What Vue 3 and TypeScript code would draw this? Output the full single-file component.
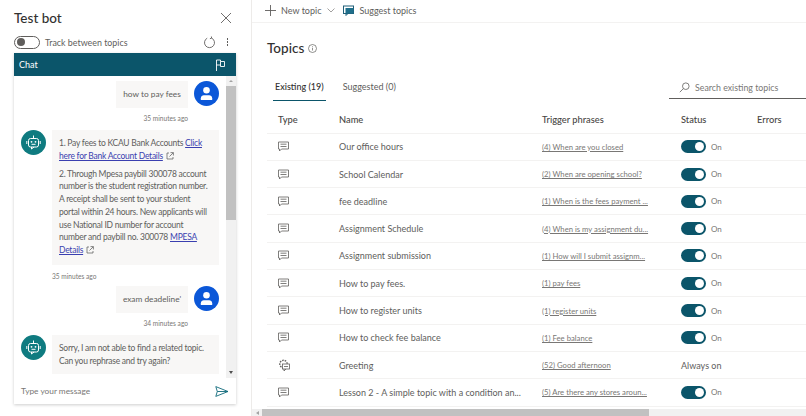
<script setup lang="ts">
interface Topic {
  name: string
  phrase: string
  system?: boolean
}

const topics: Topic[] = [
  { name: 'Our office hours', phrase: '(4) When are you closed' },
  { name: 'School Calendar', phrase: '(2) When are opening school?' },
  { name: 'fee deadline', phrase: '(1) When is the fees payment ...' },
  { name: 'Assignment Schedule', phrase: '(4) When is my assignment du...' },
  { name: 'Assignment submission', phrase: '(1) How will I submit assignm...' },
  { name: 'How to pay fees.', phrase: '(1) pay fees' },
  { name: 'How to register units', phrase: '(1) register units' },
  { name: 'How to check fee balance', phrase: '(1) Fee balance' },
  { name: 'Greeting', phrase: '(52) Good afternoon', system: true },
  { name: 'Lesson 2 - A simple topic with a condition an...', phrase: '(5) Are there any stores aroun...' },
]
</script>

<template>
  <div class="page">
    <aside class="side">
      <div class="side-head">
        <span class="side-title">Test bot</span>
        <svg class="close" width="12" height="12" viewBox="0 0 12 12"><path d="M1 1l10 10M11 1L1 11" stroke="#605e5c" stroke-width="0.9" fill="none" /></svg>
      </div>
      <div class="track">
        <span class="switch-off"><i></i></span>
        <span class="track-label">Track between topics</span>
        <svg class="reset" width="13" height="13" viewBox="0 0 13 13"><path d="M4.2 2.2a5 5 0 1 0 4.4-.1M8.4 .5l.2 1.7-1.7.5" stroke="#605e5c" stroke-width="0.9" fill="none" /></svg>
        <span class="dots"><i></i><i></i><i></i></span>
      </div>
      <section class="chat">
        <header class="chat-head">
          <span>Chat</span>
          <svg width="11" height="12" viewBox="0 0 11 12"><path d="M1.5 12V1h4v1.5h4v5h-4V6h-4M5.5 2.500V6" stroke="#fff" stroke-width="0.9" fill="none" /></svg>
        </header>
        <div class="chat-body">
          <div class="messages">
            <div class="row-user">
              <div class="bubble user-one">how to pay fees</div>
              <span class="avatar user">
                <svg width="15" height="15" viewBox="0 0 15 15"><circle cx="7.500" cy="4.300" r="3.300" fill="#fff" /><path d="M1.800 14v-1.800c0-2 1.600-3 3-3h5.400c1.400 0 3 1 3 3V14z" fill="#fff" /></svg>
              </span>
            </div>
            <div class="time right">35 minutes ago</div>
            <div class="row-bot">
              <span class="avatar bot">
                <svg width="15" height="15" viewBox="0 0 15 15"><path d="M7.500 .5v2.500" stroke="#fff" /><rect x="2.500" y="3.500" width="10" height="8.500" rx="2" stroke="#fff" fill="none" /><path d="M.8 6v3M14.200 6v3M5.500 12v2l2.500-2" stroke="#fff" fill="none" /><circle cx="5.500" cy="6.800" r=".9" fill="#fff" /><circle cx="9.500" cy="6.800" r=".9" fill="#fff" /><path d="M5.500 9.300h4" stroke="#fff" /></svg>
              </span>
              <div class="bubble bot-one">
                <p>1. Pay fees to KCAU Bank Accounts <a>Click here for Bank Account Details</a><svg class="ext" width="8" height="8" viewBox="0 0 8 8"><path d="M3 1H1v6h6V5M4.500 .6h2.900v2.900M7.200 .8L3.500 4.500" stroke="#555" stroke-width=".7" fill="none" /></svg></p>
                <p>2. Through Mpesa paybill 300078 account number is the student registration number. A receipt shall be sent to your student portal within 24 hours. New applicants will use National ID number for account number and paybill no. 300078 <a>MPESA Details</a><svg class="ext" width="8" height="8" viewBox="0 0 8 8"><path d="M3 1H1v6h6V5M4.500 .6h2.900v2.900M7.200 .8L3.500 4.500" stroke="#555" stroke-width=".7" fill="none" /></svg></p>
              </div>
            </div>
            <div class="time left">35 minutes ago</div>
            <div class="row-user second">
              <div class="bubble user-two">exam deadeline'</div>
              <span class="avatar user">
                <svg width="15" height="15" viewBox="0 0 15 15"><circle cx="7.500" cy="4.300" r="3.300" fill="#fff" /><path d="M1.800 14v-1.800c0-2 1.600-3 3-3h5.400c1.400 0 3 1 3 3V14z" fill="#fff" /></svg>
              </span>
            </div>
            <div class="time right">34 minutes ago</div>
            <div class="row-bot">
              <span class="avatar bot">
                <svg width="15" height="15" viewBox="0 0 15 15"><path d="M7.500 .5v2.500" stroke="#fff" /><rect x="2.500" y="3.500" width="10" height="8.500" rx="2" stroke="#fff" fill="none" /><path d="M.8 6v3M14.200 6v3M5.500 12v2l2.500-2" stroke="#fff" fill="none" /><circle cx="5.500" cy="6.800" r=".9" fill="#fff" /><circle cx="9.500" cy="6.800" r=".9" fill="#fff" /><path d="M5.500 9.300h4" stroke="#fff" /></svg>
              </span>
              <div class="bubble bot-two">Sorry, I am not able to find a related topic. Can you rephrase and try again?</div>
            </div>
          </div>
          <div class="vbar">
            <span class="arrow up"></span>
            <span class="vthumb"></span>
            <span class="arrow down"></span>
          </div>
        </div>
        <footer class="composer">
          <span>Type your message</span>
          <svg width="14" height="11" viewBox="0 0 14 11"><path d="M.8 .6L13 5.500.8 10.400l1.500-4.900zM2.300 5.500H13" stroke="#0f6a7a" stroke-width=".9" fill="none" /></svg>
        </footer>
      </section>
    </aside>

    <main class="main">
      <div class="toolbar">
        <span class="tool">
          <svg width="11" height="11" viewBox="0 0 11 11"><path d="M5.500 0v11M0 5.500h11" stroke="#605e5c" stroke-width=".9" /></svg>
          New topic
          <svg class="caret" width="8" height="5" viewBox="0 0 8 5"><path d="M.5 .5L4 4 7.500 .5" stroke="#8a8886" stroke-width=".8" fill="none" /></svg>
        </span>
        <span class="tool suggest">
          <svg width="11" height="11" viewBox="0 0 11 11"><rect x=".5" y="1" width="10" height="7.500" fill="#fff" stroke="#1f5f78" /><rect x="2.500" y="3" width="8" height="5.500" fill="#1f6f8b" /><path d="M3 8.500v2l2-2" stroke="#1f5f78" fill="none" /></svg>
          Suggest topics
        </span>
      </div>
      <div class="content">
        <h1 class="title">Topics
          <svg width="9" height="9" viewBox="0 0 9 9"><circle cx="4.500" cy="4.500" r="4" stroke="#605e5c" stroke-width=".7" fill="none" /><path d="M4.500 4v2.500M4.500 2.300v1" stroke="#605e5c" stroke-width=".7" /></svg>
        </h1>
        <div class="tabbar">
          <span class="tab active">Existing (19)</span>
          <span class="tab">Suggested (0)</span>
          <span class="search">
            <svg width="11" height="11" viewBox="0 0 11 11"><circle cx="6.800" cy="4.200" r="3.300" stroke="#605e5c" stroke-width=".8" fill="none" /><path d="M4.400 6.600L.8 10.200" stroke="#605e5c" stroke-width=".8" /></svg>
            Search existing topics
          </span>
        </div>
        <div class="grid-row head">
          <span>Type</span><span>Name</span><span>Trigger phrases</span><span>Status</span><span>Errors</span>
        </div>
        <div v-for="t in topics" :key="t.name" class="grid-row">
          <span class="type">
            <svg v-if="!t.system" width="11" height="11" viewBox="0 0 11 11"><path d="M.5 1h10v7H3.500L1.500 10V8h-1zM2.500 3.200h6M2.500 5.500h6" stroke="#605e5c" stroke-width=".8" fill="none" /></svg>
            <svg v-else width="12" height="13" viewBox="0 0 12 13"><circle cx="5.500" cy="5" r="3.700" stroke="#605e5c" stroke-width="1.400" stroke-dasharray="1.600 1" fill="none" /><rect x="4.500" y="5" width="7" height="5" fill="#fff" stroke="#605e5c" stroke-width=".8" /><path d="M6 10v2l2-2M6 7.500h4" stroke="#605e5c" stroke-width=".8" fill="none" /></svg>
          </span>
          <span class="name">{{ t.name }}</span>
          <a class="phrase">{{ t.phrase }}</a>
          <span v-if="t.system" class="always">Always on</span>
          <span v-else class="status"><span class="switch-on"><i></i></span>On</span>
          <span></span>
        </div>
      </div>
      <div class="hbar">
        <span class="harrow"></span>
        <span class="hthumb"></span>
      </div>
    </main>
  </div>
</template>

<style>
html, body { margin: 0; background: #fff; }
</style>

<style scoped>
.page {
  display: flex; width: 806px; height: 416px; overflow: hidden; background: #fff;
  font-family: Lato, "Open Sans", sans-serif; color: #605e5c; font-size: 9px;
}
.side {
  width: 252px; flex: none; box-sizing: border-box; padding: 0 15px 12px 14px;
  border-right: 1px solid #edebe9; display: flex; flex-direction: column;
}
.side-head { display: flex; justify-content: space-between; align-items: center; height: 33px; padding-top: 2px; padding-right: 4px; box-sizing: border-box; }
.side-title { font-size: 13.500px; font-weight: 500; color: #323130; }
.track { display: flex; align-items: center; height: 18px; }
.switch-off {
  width: 22px; height: 11px; border: 1px solid #605e5c; border-radius: 7px;
  display: flex; align-items: center; padding-left: 2px; flex: none;
}
.switch-off i { width: 8px; height: 8px; border-radius: 50%; background: #605e5c; }
.track-label { margin-left: 5px; font-size: 8.900px; flex: 1; }
.reset { margin-right: 11px; }
.dots { display: flex; flex-direction: column; gap: 1.500px; margin-right: 8px; }
.dots i { width: 1.500px; height: 1.500px; background: #605e5c; }
.chat {
  margin-top: 2px; flex: 1; min-height: 0; display: flex; flex-direction: column;
  box-shadow: 0 1px 3px rgba(0,0,0,.2);
}
.chat-head {
  height: 23px; flex: none; background: #0b556a; color: #fff; font-size: 9px;
  display: flex; align-items: center; justify-content: space-between; padding: 0 10px 0 5px;
}
.chat-body { flex: 1; min-height: 0; display: flex; overflow: hidden; }
.messages { flex: 1; min-width: 0; padding: 5px 7px 0; box-sizing: border-box; }
.row-user { display: flex; justify-content: flex-end; align-items: flex-start; gap: 6px; }
.row-user.second { margin-top: 7px; }
.row-bot { display: flex; gap: 6px; align-items: flex-start; }
.avatar {
  width: 25px; height: 25px; border-radius: 50%; flex: none;
  display: flex; align-items: center; justify-content: center;
}
.avatar.user { background: #0b57d8; }
.avatar.bot { background: #0f7b80; }
.bubble { background: #f8f7f6; color: #605e5c; box-sizing: border-box; }
.user-one, .user-two { width: 72px; height: 27px; line-height: 27px; text-align: center; font-size: 8.300px; }
.bot-one { width: 168px; height: 135px; padding: 7px 8px 0 7px; line-height: 12.700px; font-size: 8.500px; letter-spacing: -.25px; }
.bot-one p { margin: 0 0 5.300px; }
.bot-one a { color: #3a3fb0; text-decoration: underline; }
.ext { margin-left: 3px; vertical-align: -1px; }
.bot-two { width: 168px; height: 39px; padding: 7px 8px 0 7px; line-height: 12.700px; font-size: 8.500px; letter-spacing: -.25px; }
.time { font-size: 6.600px; color: #797775; height: 22px; line-height: 20px; }
.time.right { text-align: right; padding-right: 31px; }
.time.left { padding-left: 31px; height: 14px; line-height: 18px; padding-top: 2px; margin-bottom: -2px; }
.vbar { width: 10px; flex: none; background: #f1f1f1; display: flex; flex-direction: column; align-items: center; }
.arrow { width: 0; height: 0; border-left: 2px solid transparent; border-right: 2px solid transparent; margin: 4px 0; }
.arrow.up { border-bottom: 2px solid #a3a3a3; }
.arrow.down { border-top: 3px solid #505050; margin-top: auto; }
.vthumb { width: 100%; height: 134px; background: #c1c1c1; }
.composer {
  height: 26px; flex: none; display: flex; align-items: center; justify-content: space-between;
  padding: 0 7px; color: #797775; font-size: 8.300px;
}
.main { flex: 1; min-width: 0; display: flex; flex-direction: column; }
.toolbar {
  height: 23px; flex: none; display: flex; align-items: center; padding: 0 0 2px 13px;
  box-sizing: border-box; border-bottom: 1px solid #f3f2f1; gap: 8px;
}
.tool { display: flex; align-items: center; gap: 5px; }
.caret { margin-left: 1px; }
.content { flex: 1; min-height: 0; padding: 0 0 0 15px; overflow: hidden; }
.title { margin: 16px 0 0; font-size: 13.500px; line-height: 18px; font-weight: 500; color: #323130; display: flex; align-items: center; gap: 4px; }
.tabbar { display: flex; align-items: center; margin-top: 18px; height: 26px; margin-bottom: 5px; }
.tab { padding: 0 2px; margin-right: 18px; height: 26px; line-height: 24px; box-sizing: border-box; font-size: 9px; }
.tab:first-child { margin-left: 6px; }
.tab.active { color: #323130; font-weight: 500; border-bottom: 1px solid #0b556a; margin-right: 15px; }
.search {
  margin-left: auto; width: 137px; height: 22px; box-sizing: border-box; border-bottom: 1px solid #605e5c;
  display: flex; align-items: center; gap: 5px; padding-left: 10px; color: #797775; font-size: 8.800px;
}
.grid-row {
  display: grid; grid-template-columns: 61px 203px 139px 76px 1fr; align-items: center;
  height: 27.300px; box-sizing: border-box; padding-left: 11px; border-bottom: 1px solid #f3f2f1; margin-right: -10px;
}
.grid-row.head { font-weight: 500; color: #484644; height: 27.600px; font-size: 9.300px; }
.type { display: flex; }
.name { font-size: 9px; white-space: nowrap; }
.phrase { color: #797775; text-decoration: underline; font-size: 7.700px; white-space: nowrap; }
.status { display: flex; align-items: center; gap: 5px; font-size: 8px; color: #797775; }
.switch-on {
  width: 25px; height: 13px; background: #0b556a; border-radius: 7px;
  display: flex; align-items: center; justify-content: flex-end; padding-right: 2px; box-sizing: border-box;
}
.switch-on i { width: 9px; height: 9px; border-radius: 50%; background: #fff; }
.always { font-size: 9px; }
.hbar { height: 7px; flex: none; background: #f1f1f1; display: flex; align-items: center; }
.harrow { width: 10px; flex: none; display: flex; justify-content: center; }
.harrow::before { content: ""; border-right: 3px solid #a3a3a3; border-top: 2px solid transparent; border-bottom: 2px solid transparent; }
.hthumb { width: 387px; height: 100%; background: #c1c1c1; }
</style>
